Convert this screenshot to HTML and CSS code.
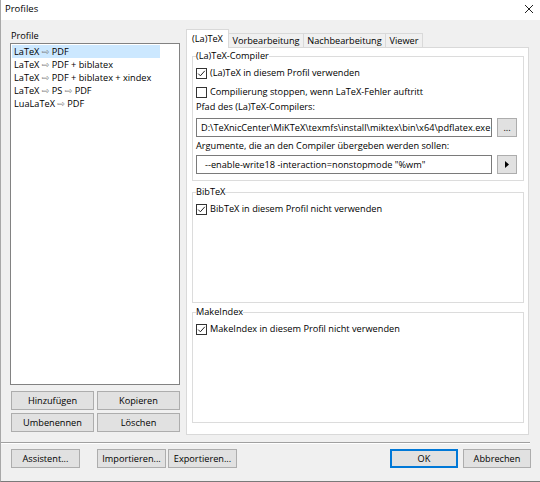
FILE: index.html
```html
<!DOCTYPE html>
<html>
<head>
<meta charset="utf-8">
<link rel="stylesheet" href="styles.css">
</head>
<body>
<div class="window">
  <div class="titlebar">
    <span class="title">Profiles</span>
    <svg class="close" width="10" height="10" viewBox="0 0 10 10"><path d="M1 1L9 9M9 1L1 9" stroke="#222" stroke-width="1" fill="none"/></svg>
  </div>
  <div class="main">
    <div class="left">
      <div class="label">Profile</div>
      <div class="listbox">
        <div class="item selected">LaTeX <span class="arr">⇨</span> PDF</div>
        <div class="item">LaTeX <span class="arr">⇨</span> PDF + biblatex</div>
        <div class="item">LaTeX <span class="arr">⇨</span> PDF + biblatex + xindex</div>
        <div class="item">LaTeX <span class="arr">⇨</span> PS <span class="arr">⇨</span> PDF</div>
        <div class="item">LuaLaTeX <span class="arr">⇨</span> PDF</div>
      </div>
      <div class="btngrid">
        <div class="btn">Hinzufügen</div>
        <div class="btn">Kopieren</div>
        <div class="btn">Umbenennen</div>
        <div class="btn">Löschen</div>
      </div>
    </div>
    <div class="right">
      <div class="tabs">
        <div class="tab active t1">(La)TeX</div>
        <div class="tab t2">Vorbearbeitung</div>
        <div class="tab t3">Nachbearbeitung</div>
        <div class="tab t4">Viewer</div>
      </div>
      <div class="panel">
        <fieldset class="group g1">
          <legend>(La)TeX-Compiler</legend>
          <div class="check c1"><span class="box"><svg width="9" height="9" viewBox="0 0 9 9"><polyline points="1.2,4.6 3.4,6.8 7.8,1.8" stroke="#222" stroke-width="1" fill="none"/></svg></span><span>(La)TeX in diesem Profil verwenden</span></div>
          <div class="check c2"><span class="box"></span><span>Compilierung stoppen, wenn LaTeX-Fehler auftritt</span></div>
          <div class="lbl l1">Pfad des (La)TeX-Compilers:</div>
          <div class="inrow r1">
            <div class="input">D:\TeXnicCenter\MiKTeX\texmfs\install\miktex\bin\x64\pdflatex.exe</div>
            <div class="btn sbtn dots">...</div>
          </div>
          <div class="lbl l2">Argumente, die an den Compiler übergeben werden sollen:</div>
          <div class="inrow r2">
            <div class="input args">--enable-write18 -interaction=nonstopmode "%wm"</div>
            <div class="btn sbtn"><svg width="4" height="7" viewBox="0 0 4 7"><polygon points="0,0 4,3.5 0,7" fill="#000"/></svg></div>
          </div>
        </fieldset>
        <fieldset class="group g2">
          <legend>BibTeX</legend>
          <div class="check c1"><span class="box"><svg width="9" height="9" viewBox="0 0 9 9"><polyline points="1.2,4.6 3.4,6.8 7.8,1.8" stroke="#222" stroke-width="1" fill="none"/></svg></span><span>BibTeX in diesem Profil nicht verwenden</span></div>
        </fieldset>
        <fieldset class="group g3">
          <legend>MakeIndex</legend>
          <div class="check c1"><span class="box"><svg width="9" height="9" viewBox="0 0 9 9"><polyline points="1.2,4.6 3.4,6.8 7.8,1.8" stroke="#222" stroke-width="1" fill="none"/></svg></span><span>MakeIndex in diesem Profil nicht verwenden</span></div>
        </fieldset>
      </div>
    </div>
  </div>
  <div class="footer">
    <div class="btn fb">Assistent...</div>
    <div class="btn fb imp">Importieren...</div>
    <div class="btn fb exp">Exportieren...</div>
    <div class="btn fb ok">OK</div>
    <div class="btn fb cancel">Abbrechen</div>
  </div>
</div>
</body>
</html>
```
FILE: styles.css
```css
html, body {
  margin: 0;
  padding: 0;
}
.window {
  width: 540px;
  height: 482px;
  box-sizing: border-box;
  background: #f0f0f0;
  border-left: 1px solid #a8a8a8;
  border-bottom: 1px solid #7a7a7a;
  font-family: "Open Sans", "Noto Sans", sans-serif;
  font-size: 9.2px;
  color: #000;
  display: flex;
  flex-direction: column;
  overflow: hidden;
}
.titlebar {
  height: 20px;
  flex: none;
  background: #fff;
  display: flex;
  justify-content: space-between;
  align-items: flex-start;
  padding-left: 4px;
}
.title {
  line-height: 14px;
  margin-top: 2px;
  font-size: 9.5px;
}
.close {
  margin-top: 4px;
  margin-right: 6px;
}
.main {
  display: flex;
  gap: 6px;
  padding: 9px 0 0 9px;
}
.left {
  width: 170px;
  display: flex;
  flex-direction: column;
}
.label {
  height: 14px;
  line-height: 14px;
  padding-left: 1px;
}
.listbox {
  height: 342px;
  box-sizing: border-box;
  border: 1px solid #828282;
  background: #fff;
  padding-top: 1px;
}
.item {
  width: 148px;
  height: 13px;
  line-height: 13px;
  margin-left: 1px;
  padding-left: 2px;
  box-sizing: border-box;
  white-space: nowrap;
}
.item.selected {
  background: #cce8ff;
}
.arr {
  font-family: "DejaVu Sans", sans-serif;
  font-size: 9px;
  color: #7a7a7a;
}
.btngrid {
  display: grid;
  grid-template-columns: 83px 83px;
  grid-auto-rows: 19px;
  gap: 3px;
  margin: 6px 0 0 1px;
}
.btn {
  box-sizing: border-box;
  border: 1px solid #adadad;
  background: #e1e1e1;
  display: flex;
  align-items: center;
  justify-content: center;
  white-space: nowrap;
}
.right {
  width: 343px;
  display: flex;
  flex-direction: column;
}
.tabs {
  height: 18px;
  display: flex;
  align-items: flex-end;
}
.tab {
  box-sizing: border-box;
  height: 14px;
  line-height: 13px;
  border: 1px solid #d9d9d9;
  border-bottom: none;
  background: #f0f0f0;
  text-align: center;
  white-space: nowrap;
  margin-left: -1px;
}
.tab.active {
  height: 19px;
  line-height: 17px;
  margin-bottom: -1px;
  margin-left: 0;
  background: #fff;
  position: relative;
  z-index: 1;
}
.t1 { width: 43px; }
.t2 { width: 76px; }
.t3 { width: 83px; }
.t4 { width: 38px; }
.panel {
  height: 388px;
  box-sizing: border-box;
  border: 1px solid #d9d9d9;
  background: #fff;
  padding: 1px 4px 11px 5px;
  display: flex;
  flex-direction: column;
}
.group {
  margin: 0;
  border: 1px solid #dcdcdc;
  padding: 0 6px 6px 3px;
  min-width: 0;
}
.group legend {
  padding: 0;
  margin: 0;
  line-height: 14px;
}
.g2 {
  flex: 1;
  margin-top: 4px;
}
.g3 {
  flex: 1;
  margin-top: 2px;
}
.check {
  display: flex;
  align-items: center;
  height: 14px;
  line-height: 14px;
  margin-top: 3px;
  white-space: nowrap;
}
.check.c2 {
  margin-top: 5px;
}
.box {
  width: 11px;
  height: 11px;
  box-sizing: border-box;
  border: 1px solid #333;
  background: #fff;
  margin-right: 3px;
  flex: none;
  display: flex;
  align-items: center;
  justify-content: center;
}
.lbl {
  line-height: 14px;
  white-space: nowrap;
}
.l1 { margin-top: 1px; }
.l2 { margin-top: 2px; }
.inrow {
  display: flex;
  gap: 5px;
  height: 19px;
}
.r1 { margin-top: 4px; }
.r2 { margin-top: 2px; }
.input {
  flex: 1;
  min-width: 0;
  box-sizing: border-box;
  border: 1px solid #7a7a7a;
  background: #fff;
  padding-left: 4px;
  line-height: 17px;
  white-space: nowrap;
  overflow: hidden;
}
.input.args {
  padding-left: 8px;
}
.sbtn {
  width: 20px;
  flex: none;
}
.dots {
  align-items: flex-end;
  line-height: 12px;
  padding-bottom: 2px;
}
.footer {
  margin: 7px 10px 0 0;
  border-top: 1px solid #a0a0a0;
  box-shadow: inset 0 1px 0 #fff;
  padding: 6px 0 0 10px;
  display: flex;
}
.fb {
  width: 69px;
  height: 19px;
}
.imp { margin-left: 17px; }
.exp { margin-left: 2px; }
.ok {
  margin-left: auto;
  width: 68px;
  border: 1px solid #0078d7;
  box-shadow: inset 0 0 0 1px #0078d7;
}
.cancel {
  width: 68px;
  margin-left: 5px;
  margin-right: -1px;
}
```
